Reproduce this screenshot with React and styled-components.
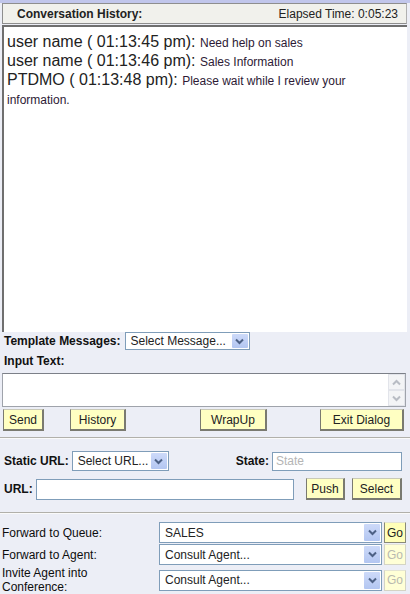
import React from "react";
import styled, { createGlobalStyle } from "styled-components";

const GlobalStyle = createGlobalStyle`
  html, body {
    margin: 0;
    padding: 0;
    background: #eceef6;
  }
  body {
    font-family: "Liberation Sans", Arial, sans-serif;
    font-size: 12px;
    color: #111;
  }
  * { box-sizing: border-box; }
`;

const Chevron = ({ color = "#4d6185", up = false }) => (
  <svg width="9" height="7" viewBox="0 0 9 7">
    <path
      d={up ? "M1 5.5 L4.5 2 L8 5.5" : "M1 1.5 L4.5 5 L8 1.5"}
      fill="none"
      stroke={color}
      strokeWidth="2"
    />
  </svg>
);

const messages = [
  { who: "user name", time: "01:13:45 pm", text: "Need help on sales" },
  { who: "user name", time: "01:13:46 pm", text: "Sales Information" },
  {
    who: "PTDMO",
    time: "01:13:48 pm",
    text: "Please wait while I review your information.",
  },
];

const forwards = [
  { label: "Forward to Queue:", value: "SALES", enabled: true },
  { label: "Forward to Agent:", value: "Consult Agent...", enabled: false },
  { label: "Invite Agent into Conference:", value: "Consult Agent...", enabled: false, tall: true },
];

const Combo = ({ value, width, height = 18 }) => (
  <ComboBox $width={width} $height={height}>
    <ComboValue>{value}</ComboValue>
    <ComboArrow>
      <Chevron />
    </ComboArrow>
  </ComboBox>
);

export default function App() {
  return (
    <Page>
      <GlobalStyle />
      <TopStrip />
      <Header>
        <HeaderTitle>Conversation History:</HeaderTitle>
        <span>Elapsed Time: 0:05:23</span>
      </Header>
      <Chat>
        {messages.map((m, i) => (
          <Message key={i}>
            {m.who} ( {m.time}): <MessageText>{m.text}</MessageText>
          </Message>
        ))}
      </Chat>

      <Panel>
        <TemplateRow>
          <Label>Template Messages:</Label>
          <Combo value="Select Message..." width={125} />
        </TemplateRow>
        <InputLabel>Input Text:</InputLabel>
        <TextBox>
          <TextArea />
          <Scrollbar>
            <ScrollBtn>
              <Chevron color="#b8bcc4" up />
            </ScrollBtn>
            <ScrollBtn>
              <Chevron color="#b8bcc4" />
            </ScrollBtn>
          </Scrollbar>
        </TextBox>

        <ButtonRow>
          <Button $width={41}>Send</Button>
          <Button $width={56}>History</Button>
          <Button $width={67}>WrapUp</Button>
          <Button $width={84} $end>
            Exit Dialog
          </Button>
        </ButtonRow>

        <Divider />

        <UrlRow>
          <Group>
            <Label>Static URL:</Label>
            <Combo value="Select URL..." width={97} height={20} />
          </Group>
          <Group>
            <Label>State:</Label>
            <Field $width={130} placeholder="State" />
          </Group>
        </UrlRow>

        <PushRow>
          <Label>URL:</Label>
          <Field $grow />
          <PushButton $width={39} $ml={12}>
            Push
          </PushButton>
          <PushButton $width={50} $ml={7}>
            Select
          </PushButton>
        </PushRow>

        <Divider $top={12} />

        <ForwardGrid>
          {forwards.map((f, i) => (
            <React.Fragment key={i}>
              <ForwardLabel $tall={f.tall}>{f.label}</ForwardLabel>
              <Combo value={f.value} width={223} height={21} />
              <GoButton disabled={!f.enabled}>Go</GoButton>
            </React.Fragment>
          ))}
        </ForwardGrid>
      </Panel>
    </Page>
  );
}

const Page = styled.div`
  width: 410px;
  height: 594px;
  display: flex;
  flex-direction: column;
  background: #eceef6;
  overflow: hidden;
`;

const TopStrip = styled.div`
  height: 3px;
  background: #c1c6eb;
`;

const Header = styled.div`
  height: 21px;
  margin: 0 3px 0 2px;
  padding: 0 8px 0 14px;
  display: flex;
  align-items: center;
  justify-content: space-between;
  background: #f1f1ec;
  border: 1px solid #8e8e8e;
  border-right-color: #b0b0b0;
  font-size: 12px;
  color: #222;
`;

const HeaderTitle = styled.span`
  font-weight: bold;
`;

const Chat = styled.div`
  height: 307px;
  margin: 1px 3px 0 2px;
  padding: 6px 3px;
  background: #fff;
  border-left: 2px solid #6f6f6f;
  border-top: 2px solid #6f6f6f;
`;

const Message = styled.div`
  font-size: 16px;
  line-height: 18px;
  color: #222;
`;

const MessageText = styled.span`
  font-size: 12px;
  color: #2d1a35;
`;

const Panel = styled.div`
  flex: 1;
  display: flex;
  flex-direction: column;
`;

const Label = styled.span`
  font-weight: bold;
  font-size: 12px;
  color: #111;
  white-space: nowrap;
`;

const TemplateRow = styled.div`
  height: 18px;
  padding-left: 4px;
  display: flex;
  align-items: center;
  gap: 4px;
`;

const InputLabel = styled(Label)`
  display: block;
  height: 23px;
  padding: 4px 4px 0;
  line-height: 15px;
`;

const ComboBox = styled.div`
  width: ${(p) => p.$width}px;
  height: ${(p) => p.$height}px;
  display: flex;
  align-items: stretch;
  background: #fff;
  border: 1px solid #7f9db9;
`;

const ComboValue = styled.span`
  flex: 1;
  padding: 0 5px;
  display: flex;
  align-items: center;
  font-size: 12px;
  color: #222;
  white-space: nowrap;
  overflow: hidden;
`;

const ComboArrow = styled.span`
  width: 16px;
  margin: 1px;
  display: flex;
  align-items: center;
  justify-content: center;
  background: linear-gradient(#cddaf9, #b3c6f1);
  border-radius: 1px;
`;

const TextBox = styled.div`
  height: 34px;
  margin: 0 4px 0 2px;
  display: flex;
  background: #fff;
  border: 1px solid #9fa3ab;
  border-top-color: #7c8088;
`;

const TextArea = styled.div`
  flex: 1;
`;

const Scrollbar = styled.div`
  width: 17px;
  display: flex;
  flex-direction: column;
  justify-content: space-between;
  background: #fbfbf9;
`;

const ScrollBtn = styled.div`
  height: 16px;
  display: flex;
  align-items: center;
  justify-content: center;
  background: #f3f4f6;
  border: 1px solid #e2e4ea;
`;

const ButtonRow = styled.div`
  height: 22px;
  margin-top: 2px;
  padding: 0 6px 0 3px;
  display: grid;
  grid-template-columns: 67px 130px 119px 1fr;
`;

const Button = styled.div`
  width: ${(p) => (p.$width ? `${p.$width}px` : "auto")};
  height: 22px;
  padding: 0 4px;
  justify-self: ${(p) => (p.$end ? "end" : "start")};
  display: flex;
  align-items: center;
  justify-content: center;
  flex-shrink: 0;
  background: #ffffc2;
  border: 1px solid #7a7a70;
  border-top-color: #c9c9b8;
  border-right-width: 2px;
  border-bottom-width: 2px;
  font-size: 12px;
  color: #222;
`;

const PushButton = styled(Button)`
  margin-left: ${(p) => p.$ml || 0}px;
`;

const Divider = styled.div`
  height: 2px;
  margin-top: ${(p) => p.$top || 6}px;
  border-top: 1px solid #b1b0aa;
  border-bottom: 1px solid #fafafa;
`;

const UrlRow = styled.div`
  height: 20px;
  margin-top: 12px;
  padding: 0 8px 0 4px;
  display: flex;
  align-items: center;
  justify-content: space-between;
`;

const Group = styled.div`
  display: flex;
  align-items: center;
  gap: 3px;
`;

const Field = styled.input`
  width: ${(p) => (p.$width ? `${p.$width}px` : "auto")};
  flex: ${(p) => (p.$grow ? 1 : "none")};
  min-width: 0;
  height: ${(p) => (p.$grow ? 21 : 19)}px;
  padding: 0 3px;
  border: 1px solid #7f9db9;
  background: #fff;
  font-family: "Liberation Sans", Arial, sans-serif;
  font-size: 12px;
  outline: none;
  &::placeholder {
    color: #b5b5b5;
  }
`;

const PushRow = styled.div`
  height: 22px;
  margin-top: 7px;
  padding: 0 8px 0 4px;
  display: flex;
  align-items: center;
  & > ${Field} {
    margin-left: 3px;
  }
`;

const ForwardGrid = styled.div`
  margin-top: 8px;
  padding: 0 5px 0 2px;
  display: grid;
  grid-template-columns: 155px 223px 22px;
  column-gap: 2px;
  row-gap: 1px;
  align-items: center;
`;

const ForwardLabel = styled.div`
  font-size: 12px;
  line-height: 14px;
  color: #0d0d0d;
  padding-right: ${(p) => (p.$tall ? 50 : 0)}px;
  min-height: ${(p) => (p.$tall ? 28 : 0)}px;
`;

const GoButton = styled.div`
  height: 21px;
  display: flex;
  align-items: center;
  justify-content: center;
  font-size: 12px;
  background: ${(p) => (p.disabled ? "#ffffd6" : "#ffffb8")};
  color: ${(p) => (p.disabled ? "#b9b9b0" : "#222")};
  border: 1px solid ${(p) => (p.disabled ? "#d4d4c4" : "#8a8a78")};
  border-top-color: #e4e4d4;
`;
